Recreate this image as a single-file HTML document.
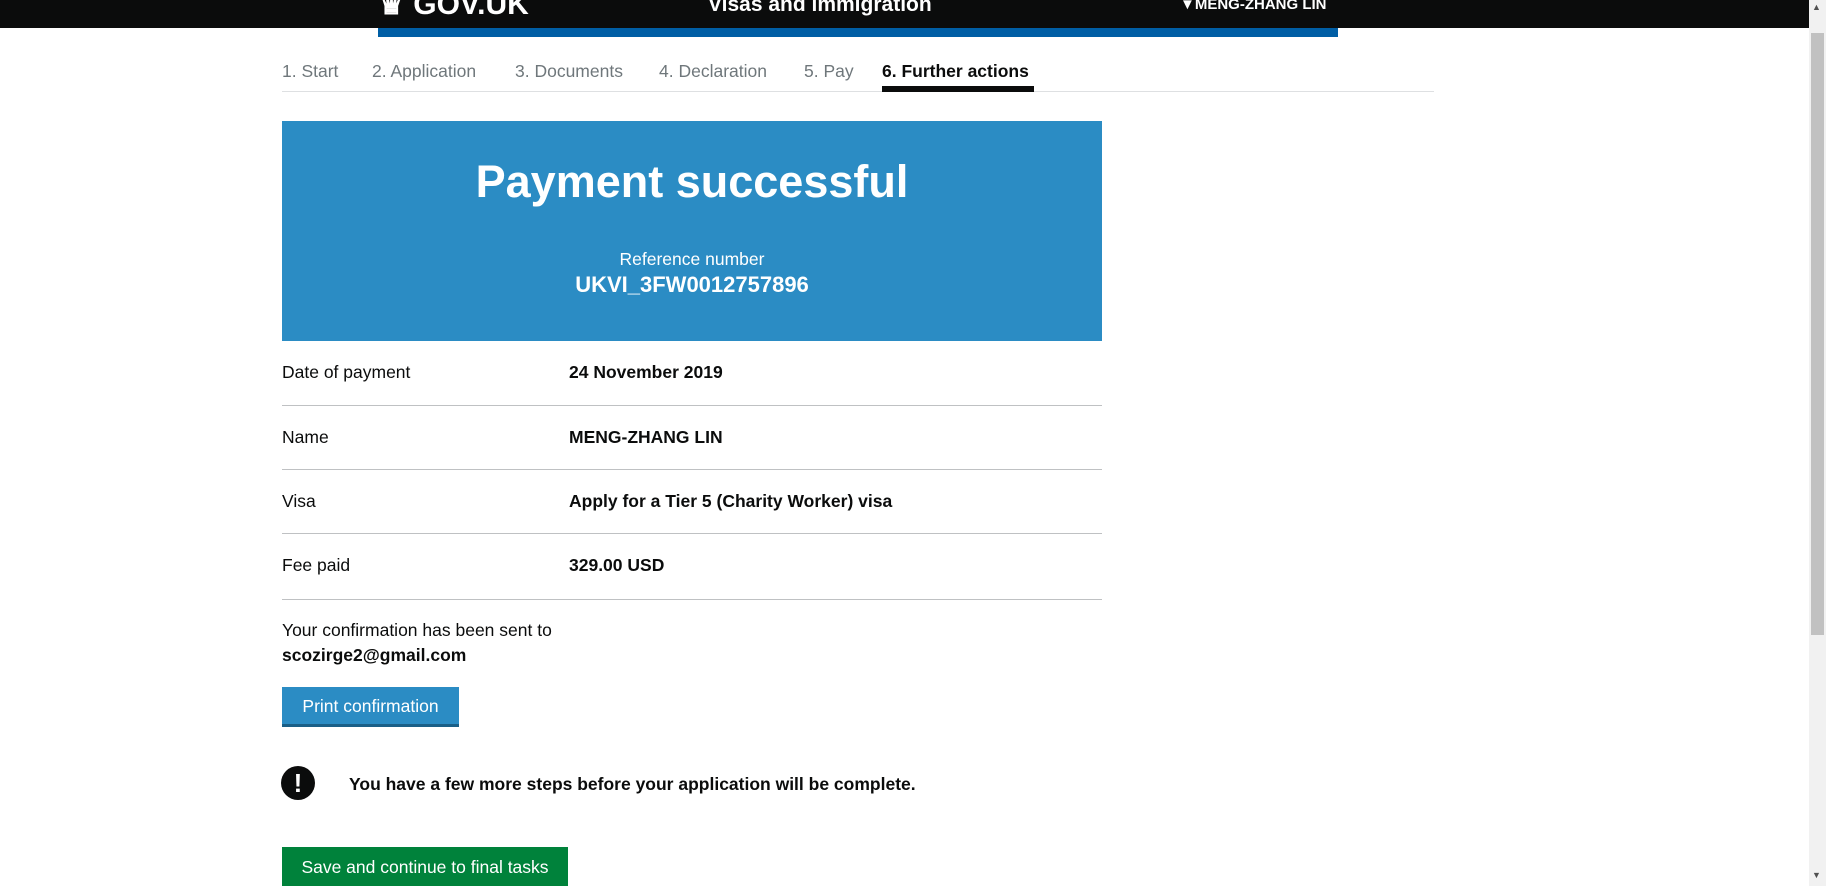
<!DOCTYPE html>
<html><head><meta charset="utf-8">
<style>
html,body{margin:0;padding:0;}
body{width:1826px;height:886px;overflow:hidden;position:relative;background:#fff;font-family:"Liberation Sans",Arial,sans-serif;color:#0b0c0c;}
.a{position:absolute;white-space:nowrap;}
.hdr{left:0;top:0;width:1809px;height:28px;background:#0b0c0c;}
.bar{left:378px;top:28px;width:960px;height:9px;background:#005ea5;}
.sb{left:1809px;top:0;width:17px;height:886px;background:#f1f1f1;}
.thumb{left:1811px;top:33px;width:13px;height:602px;background:#c1c1c1;}
.tab{top:61px;font-size:17.5px;color:#6f777b;}
.row{font-size:17.5px;}
.line{left:282px;width:820px;height:1px;background:#bfc1c3;}
</style></head><body>
<div class="a hdr"></div>
<div class="a" style="left:378px;top:-13px;color:#fff;font-weight:bold;font-size:30px;">♛ GOV.UK</div>
<div class="a" style="left:708px;top:-7px;color:#fff;font-weight:bold;font-size:21px;">Visas and immigration</div>
<div class="a" style="left:1180px;top:-4px;color:#fff;font-weight:bold;font-size:15px;">▼MENG-ZHANG LIN</div>
<div class="a bar"></div>
<div class="a sb"></div><div class="a thumb"></div>
<div class="a" style="left:1812px;top:2px;font-size:9px;color:#505050;">▲</div>
<div class="a" style="left:1812px;top:870px;font-size:9px;color:#505050;">▼</div>

<div class="a tab" style="left:282px;">1. Start</div>
<div class="a tab" style="left:372px;">2. Application</div>
<div class="a tab" style="left:515px;">3. Documents</div>
<div class="a tab" style="left:659px;">4. Declaration</div>
<div class="a tab" style="left:804px;">5. Pay</div>
<div class="a tab" style="left:882px;color:#0b0c0c;font-weight:bold;">6. Further actions</div>
<div class="a" style="left:282px;top:91px;width:1152px;height:1px;background:#dee0e2;"></div>
<div class="a" style="left:882px;top:86px;width:152px;height:6px;background:#0b0c0c;"></div>

<div class="a" style="left:282px;top:121px;width:820px;height:220px;background:#2b8cc4;color:#fff;text-align:center;">
<div style="position:absolute;left:0;right:0;top:35px;font-size:45px;font-weight:bold;">Payment successful</div>
<div style="position:absolute;left:0;right:0;top:128px;font-size:17.5px;">Reference number</div>
<div style="position:absolute;left:0;right:0;top:151px;font-size:22px;font-weight:bold;">UKVI_3FW0012757896</div>
</div>

<div class="a row" style="left:282px;top:362px;">Date of payment</div>
<div class="a row" style="left:569px;top:362px;font-weight:bold;">24 November 2019</div>
<div class="a line" style="top:405px;"></div>
<div class="a row" style="left:282px;top:427px;">Name</div>
<div class="a row" style="left:569px;top:427px;font-weight:bold;">MENG-ZHANG LIN</div>
<div class="a line" style="top:469px;"></div>
<div class="a row" style="left:282px;top:491px;">Visa</div>
<div class="a row" style="left:569px;top:491px;font-weight:bold;">Apply for a Tier 5 (Charity Worker) visa</div>
<div class="a line" style="top:533px;"></div>
<div class="a row" style="left:282px;top:555px;">Fee paid</div>
<div class="a row" style="left:569px;top:555px;font-weight:bold;">329.00 USD</div>
<div class="a line" style="top:599px;"></div>

<div class="a row" style="left:282px;top:620px;">Your confirmation has been sent to</div>
<div class="a row" style="left:282px;top:645px;font-weight:bold;">scozirge2@gmail.com</div>

<div class="a" style="left:282px;top:687px;width:177px;height:37px;background:#2b8cc4;border-bottom:3px solid #1a5f87;color:#fff;font-size:17.5px;line-height:39px;text-align:center;">Print confirmation</div>

<div class="a" style="left:281px;top:766px;width:34px;height:34px;border-radius:50%;background:#0b0c0c;color:#fff;font-weight:bold;font-size:26px;line-height:34px;text-align:center;">!</div>
<div class="a row" style="left:349px;top:774px;font-weight:bold;">You have a few more steps before your application will be complete.</div>

<div class="a" style="left:282px;top:847px;width:286px;height:39px;background:#00823b;color:#fff;font-size:17.5px;line-height:41px;text-align:center;">Save and continue to final tasks</div>
</body></html>
